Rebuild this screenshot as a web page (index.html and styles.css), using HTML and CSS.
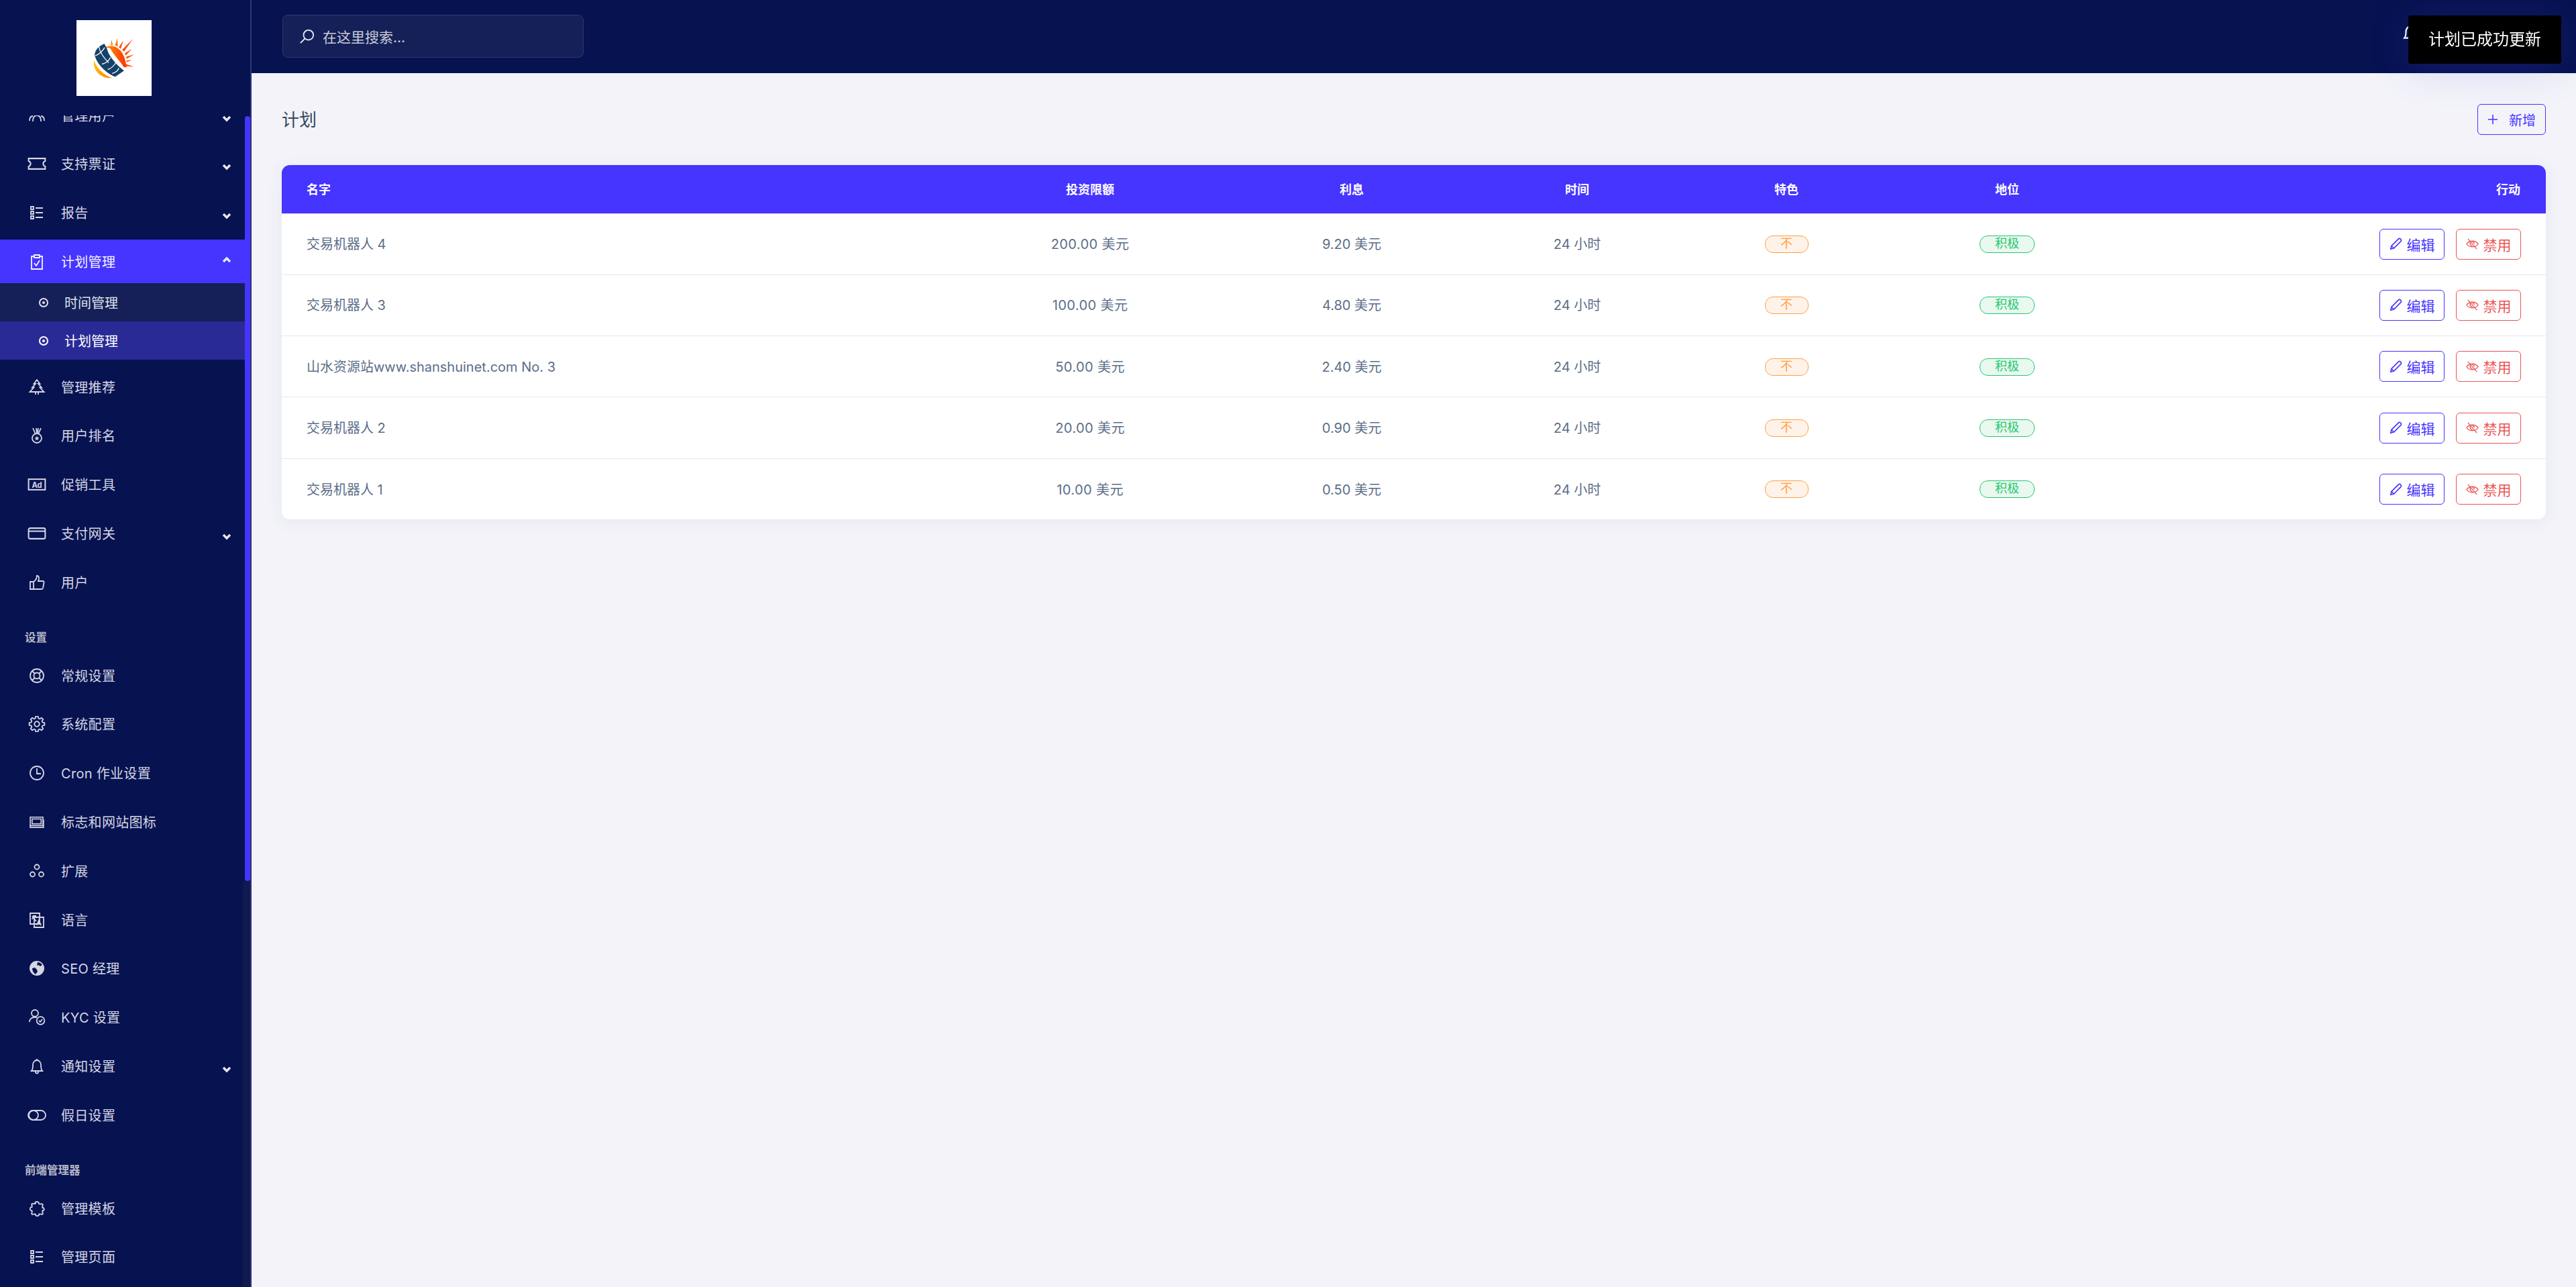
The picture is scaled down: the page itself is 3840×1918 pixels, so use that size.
FILE: index.html
```html
<!DOCTYPE html>
<html lang="zh-CN">
<head>
<meta charset="utf-8">
<title>计划</title>
<link rel="stylesheet" href="styles.css">
</head>
<body>
<svg class="sprite" xmlns="http://www.w3.org/2000/svg">
  <symbol id="i-users" viewBox="0 0 24 24"><circle cx="6" cy="8" r="2.6"/><circle cx="12" cy="6" r="3"/><circle cx="18" cy="8" r="2.6"/><path d="M1 20c0-5 2-7 5-7M23 20c0-5-2-7-5-7M6 21c0-6 2-9 6-9s6 3 6 9"/></symbol>
  <symbol id="i-ticket" viewBox="0 0 24 16"><path d="M1 1h22v3.500c-3.500.8-3.500 6.200 0 7V15H1v-3.500c3.500-.8 3.500-6.200 0-7z"/></symbol>
  <symbol id="i-tasks" viewBox="0 0 24 24"><path d="M3 3h4v4H3zM3 10h4v4H3zM3 17h4v4H3zM10 5h11M10 12h11M10 19h11"/></symbol>
  <symbol id="i-clip" viewBox="0 0 24 24"><path d="M8 4H4v19h16V4h-4"/><path d="M8 2h8v4H8zM8 14l3 4 5-8"/></symbol>
  <symbol id="i-tree" viewBox="0 0 24 24"><path d="M12 1l4.500 6H14l5 5.500h-2.500l6 6.500H1.500l6-6.500H5l5-5.500H7.500zM10 19v4M14 19v4"/></symbol>
  <symbol id="i-medal" viewBox="0 0 24 24"><path d="M6 1l4 9M11 1l1 7M13 8l1-7M18 1l-4 9"/><circle cx="12" cy="16" r="7"/><path class="solid" d="M12 12.500l1 2.400 2.500.2-1.900 1.600.6 2.500-2.200-1.300-2.200 1.300.6-2.500-1.900-1.600 2.500-.2z"/></symbol>
  <symbol id="i-card" viewBox="0 0 24 16"><rect x="1" y="1" width="22" height="14" rx="2"/><path d="M1 5h22"/></symbol>
  <symbol id="i-thumb" viewBox="0 0 24 24"><path d="M2 11h5v11H2zM7 11c3-2 5-5 5-9 3 0 4 3 2 8h7c1 0 2 1 1.500 2.500L21 20.500c-.3 1-1 1.500-2 1.500H7"/></symbol>
  <symbol id="i-ring" viewBox="0 0 24 24"><circle cx="12" cy="12" r="10"/><circle cx="12" cy="12" r="4.500"/><path d="M5 5l4 4M19 5l-4 4M5 19l4-4M19 19l-4-4"/></symbol>
  <symbol id="i-cog" viewBox="-12 -12 24 24"><circle r="3.800"/><path stroke-linejoin="round" d="M8.500-2.280L11.360-1.800 11.360 1.800 8.500 2.280 7.620 4.400 9.300 6.760 6.760 9.300 4.400 7.620 2.280 8.500 1.800 11.360-1.800 11.360-2.280 8.500-4.400 7.620-6.760 9.300-9.300 6.760-7.620 4.400-8.500 2.280-11.360 1.800-11.360-1.800-8.500-2.280-7.620-4.400-9.300-6.760-6.760-9.300-4.400-7.620-2.280-8.500-1.800-11.360 1.800-11.360 2.280-8.500 4.400-7.620 6.760-9.300 9.300-6.760 7.620-4.400z"/></symbol>
  <symbol id="i-clock" viewBox="0 0 24 24"><circle cx="12" cy="12" r="10"/><path d="M12 5v8H6" transform="matrix(-1 0 0 1 24 0)"/></symbol>
  <symbol id="i-images" viewBox="0 0 24 20"><path d="M1 2h21v14H1z"/><path d="M4 5h15v8H4z"/><path d="M1 16v3h22V6"/></symbol>
  <symbol id="i-cubes" viewBox="0 0 24 24"><circle cx="12" cy="6" r="3.500"/><circle cx="5.500" cy="17" r="3.500"/><circle cx="18.500" cy="17" r="3.500"/></symbol>
  <symbol id="i-lang" viewBox="0 0 24 24"><path d="M2 2h14v16H2zM8 8h14v15H8z"/><path class="solid" d="M15 10l4 10h-2l-.6-2h-3.300l-.6 2H11z"/><path d="M5 6l6 8M5 11l2-5h4"/></symbol>
  <symbol id="i-globe" viewBox="0 0 24 24"><circle class="solid" cx="12" cy="12" r="11"/><path class="cut" d="M13 3c3 0 5 1.500 7 4l-3 2-3-2-2 1zM5 12l4-1 3 3 1 3-3 4c-3-2-5-5-5-9z"/></symbol>
  <symbol id="i-kyc" viewBox="0 0 24 24"><circle cx="9" cy="6" r="5"/><path d="M1 19c0-4 3-7 8-7 1 0 2 .2 3 .5"/><circle cx="17.500" cy="17" r="5.800"/><path d="M15 17l2 2 3-4"/></symbol>
  <symbol id="i-bell" viewBox="0 0 24 24"><path d="M12 1v2M4 19c2-2 2-5 2-9 0-4 3-7 6-7s6 3 6 7c0 4 0 7 2 9zM3 19h18M10 19v2c0 2 4 2 4 0v-2"/></symbol>
  <symbol id="i-toggle" viewBox="0 0 28 16"><rect x="1" y="1" width="26" height="14" rx="7"/><circle cx="9" cy="8" r="7"/></symbol>
  <symbol id="i-puzzle" viewBox="0 0 24 24"><path stroke-linejoin="round" d="M9.500 4.500c-1.500-3.500 6.500-3.500 5 0 1.500 2 4.500 0 6 1 1 1.500-1 3.500 0 5.500 3-1 3 5 0 4-1 2 1 4 0 5.500-1.500 1-4-1-5.500 0 1 3.500-6 3.500-5 0-1.500-1-4 1-5.500 0-1-1.500 1-3.500 0-5.500-3.500 1-3.500-6 0-5 1-2-1-3.500 0-5 1.500-1 4 1 5.500-.5z"/></symbol>
  <symbol id="i-chev" viewBox="0 0 14 10"><path d="M2 2l5 5 5-5"/></symbol>
  <symbol id="i-pencil" viewBox="0 0 16 16"><path d="M1.500 14.500l1-4L11 2c1-1 2-1 3 0s1 2 0 3l-8.500 8.500zM2.500 10.500l3 3"/></symbol>
  <symbol id="i-eye" viewBox="0 0 20 18"><path d="M1 9c4-6 14-6 18 0-4 6-14 6-18 0z"/><path d="M7 6c-1.500 3 .5 6 3 6M13 9c0-2-1-3-3-3"/><path d="M3 1l14 16"/></symbol>
</svg>

<aside class="sidebar">
  <div class="logo-bar">
    <div class="logo">
      <svg viewBox="162 60 336 338" xmlns="http://www.w3.org/2000/svg">
        <defs><linearGradient id="sun" x1="0" y1="0" x2="1" y2="0"><stop offset="0" stop-color="#ffc20e"/><stop offset="1" stop-color="#ff3300"/></linearGradient></defs>
        <path fill="url(#sun)" d="M292 180c30-14 84-2 94 90l-12 0c-16-26-42-50-60-82-6-6-14-6-22 0zM240 240c-6 44 30 82 82 78-34-10-66-40-82-78z"/>
        <path fill="#ff7a10" d="M316 172l2-26 7 26zM334 172l11-32 2 38z"/>
        <path fill="#ff4a06" d="M351 181l21-31-12 38zM366 192l49-49-40 57zM378 208l32-20-28 30zM385 223l35-10-34 20zM386 240l24-2-24 10zM384 256l34 12-36-3z"/>
        <path fill="#164268" d="M287 165c-26 10-41 26-44 50 8 36 46 80 92 98l40-28c-26-18-68-62-76-96z"/>
        <path fill="none" stroke="#fff" stroke-width="4" d="M246 218c20-6 32-20 42-36M262 178c4 24 24 52 44 72M276 256c18-4 30-14 38-30M302 280c14-4 26-14 36-30M322 298c14-4 24-10 30-24"/>
      </svg>
    </div>
  </div>
  <nav class="menu">
    <div class="menu-scroll">
      <a class="item"><svg class="ic"><use href="#i-users"/></svg><span>管理用户</span><svg class="chev"><use href="#i-chev"/></svg></a>
      <a class="item"><svg class="ic ic-wide"><use href="#i-ticket"/></svg><span>支持票证</span><svg class="chev"><use href="#i-chev"/></svg></a>
      <a class="item"><svg class="ic"><use href="#i-tasks"/></svg><span>报告</span><svg class="chev"><use href="#i-chev"/></svg></a>
      <a class="item active"><svg class="ic"><use href="#i-clip"/></svg><span>计划管理</span><svg class="chev up"><use href="#i-chev"/></svg></a>
      <div class="sub">
        <a class="sub-item"><span class="dot"></span><span>时间管理</span></a>
        <a class="sub-item current"><span class="dot"></span><span>计划管理</span></a>
      </div>
      <a class="item"><svg class="ic"><use href="#i-tree"/></svg><span>管理推荐</span></a>
      <a class="item"><svg class="ic"><use href="#i-medal"/></svg><span>用户排名</span></a>
      <a class="item"><svg class="ic ic-wide" viewBox="0 0 24 16"><rect x="1" y="1" width="22" height="14"/><text x="12" y="12" text-anchor="middle" class="svg-ad">Ad</text></svg><span>促销工具</span></a>
      <a class="item"><svg class="ic ic-wide"><use href="#i-card"/></svg><span>支付网关</span><svg class="chev"><use href="#i-chev"/></svg></a>
      <a class="item"><svg class="ic"><use href="#i-thumb"/></svg><span>用户</span></a>
      <div class="heading">设置</div>
      <a class="item"><svg class="ic"><use href="#i-ring"/></svg><span>常规设置</span></a>
      <a class="item"><svg class="ic"><use href="#i-cog"/></svg><span>系统配置</span></a>
      <a class="item"><svg class="ic"><use href="#i-clock"/></svg><span>Cron 作业设置</span></a>
      <a class="item"><svg class="ic ic-wide"><use href="#i-images"/></svg><span>标志和网站图标</span></a>
      <a class="item"><svg class="ic"><use href="#i-cubes"/></svg><span>扩展</span></a>
      <a class="item"><svg class="ic"><use href="#i-lang"/></svg><span>语言</span></a>
      <a class="item"><svg class="ic"><use href="#i-globe"/></svg><span>SEO 经理</span></a>
      <a class="item"><svg class="ic"><use href="#i-kyc"/></svg><span>KYC 设置</span></a>
      <a class="item"><svg class="ic"><use href="#i-bell"/></svg><span>通知设置</span><svg class="chev"><use href="#i-chev"/></svg></a>
      <a class="item"><svg class="ic ic-toggle"><use href="#i-toggle"/></svg><span>假日设置</span></a>
      <div class="heading">前端管理器</div>
      <a class="item"><svg class="ic"><use href="#i-puzzle"/></svg><span>管理模板</span></a>
      <a class="item"><svg class="ic"><use href="#i-tasks"/></svg><span>管理页面</span></a>
    </div>
    <div class="track"></div>
    <div class="thumb"></div>
  </nav>
</aside>

<div class="main">
  <header class="topbar">
    <div class="search">
      <svg class="search-ic" viewBox="0 0 24 24"><circle cx="14" cy="10" r="8"/><path d="M8 16l-7 7"/></svg>
      <span>在这里搜索...</span>
    </div>
    <svg class="top-ic" viewBox="0 0 24 24"><path d="M12 1v2M4 19c2-2 2-5 2-9 0-4 3-7 6-7s6 3 6 7c0 4 0 7 2 9zM3 19h18"/></svg>
  </header>
  <main class="content">
    <div class="page-head">
      <h1>计划</h1>
      <a class="btn-add"><svg viewBox="0 0 16 16"><path d="M8 1v14M1 8h14"/></svg><span>新增</span></a>
    </div>
    <div class="card">
      <table>
        <colgroup><col class="c1"><col class="c2"><col class="c3"><col class="c4"><col class="c5"><col class="c6"><col class="c7"></colgroup>
        <thead><tr><th>名字</th><th>投资限额</th><th>利息</th><th>时间</th><th>特色</th><th>地位</th><th>行动</th></tr></thead>
        <tbody>
          <tr><td class="txt">交易机器人 4</td><td class="txt amt">200.00 美元</td><td class="txt">9.20 美元</td><td class="txt">24 小时</td><td><span class="badge warn">不</span></td><td><span class="badge ok">积极</span></td><td><div class="acts"><a class="btn edit"><svg><use href="#i-pencil"/></svg>编辑</a><a class="btn off"><svg><use href="#i-eye"/></svg>禁用</a></div></td></tr>
          <tr><td class="txt">交易机器人 3</td><td class="txt amt">100.00 美元</td><td class="txt">4.80 美元</td><td class="txt">24 小时</td><td><span class="badge warn">不</span></td><td><span class="badge ok">积极</span></td><td><div class="acts"><a class="btn edit"><svg><use href="#i-pencil"/></svg>编辑</a><a class="btn off"><svg><use href="#i-eye"/></svg>禁用</a></div></td></tr>
          <tr><td class="txt">山水资源站www.shanshuinet.com No. 3</td><td class="txt amt">50.00 美元</td><td class="txt">2.40 美元</td><td class="txt">24 小时</td><td><span class="badge warn">不</span></td><td><span class="badge ok">积极</span></td><td><div class="acts"><a class="btn edit"><svg><use href="#i-pencil"/></svg>编辑</a><a class="btn off"><svg><use href="#i-eye"/></svg>禁用</a></div></td></tr>
          <tr><td class="txt">交易机器人 2</td><td class="txt amt">20.00 美元</td><td class="txt">0.90 美元</td><td class="txt">24 小时</td><td><span class="badge warn">不</span></td><td><span class="badge ok">积极</span></td><td><div class="acts"><a class="btn edit"><svg><use href="#i-pencil"/></svg>编辑</a><a class="btn off"><svg><use href="#i-eye"/></svg>禁用</a></div></td></tr>
          <tr><td class="txt">交易机器人 1</td><td class="txt amt">10.00 美元</td><td class="txt">0.50 美元</td><td class="txt">24 小时</td><td><span class="badge warn">不</span></td><td><span class="badge ok">积极</span></td><td><div class="acts"><a class="btn edit"><svg><use href="#i-pencil"/></svg>编辑</a><a class="btn off"><svg><use href="#i-eye"/></svg>禁用</a></div></td></tr>
        </tbody>
      </table>
    </div>
  </main>
</div>
<div class="toast">计划已成功更新</div>
</body>
</html>
```
FILE: styles.css
```css
* { box-sizing: border-box; }
html, body { height: 100%; }
body {
  margin: 0;
  display: flex;
  height: 100vh;
  overflow: hidden;
  background: #f3f3f9;
  font-family: Inter, "Noto Sans CJK SC", sans-serif;
  font-size: 20px;
  color: #5b6e88;
}
.sprite { position: absolute; width: 0; height: 0; overflow: hidden; }
symbol { overflow: visible; }
svg { fill: none; stroke: currentColor; }
.solid { fill: currentColor; stroke: none; }
.cut { fill: #071251; stroke: none; }
.svg-ad { font: 700 10px Inter, sans-serif; fill: currentColor; stroke: none; }

/* sidebar */
.sidebar {
  width: 375px;
  flex: none;
  height: 100%;
  display: flex;
  flex-direction: column;
  background: #071251;
  border-right: 2px solid #2d3577;
}
.logo-bar { height: 172px; flex: none; padding: 30px 0 0 114px; }
.logo { width: 112px; height: 113px; background: #fff; }
.logo svg { display: block; width: 100%; height: 100%; stroke: none; }
.menu { flex: 1; position: relative; overflow: hidden; }
.menu-scroll { margin-top: -33px; display: flex; flex-direction: column; }
.item {
  height: 65px;
  margin-bottom: 7.8px;
  flex: none;
  display: flex;
  align-items: center;
  padding-left: 41px;
  color: #d4d6e2;
  font-size: 20px;
}
.item span { margin-left: 22px; flex: 1; letter-spacing: .3px; padding-bottom: 1px; }
.ic { width: 28px; height: 24px; flex: none; stroke-width: 1.8; }
.ic-wide { height: 18px; }
.ic-toggle { height: 18px; }
.chev { width: 14px; height: 10px; flex: none; margin: 10px 28px 0 0; stroke-width: 3.4; color: #e6e7ef; }
.chev.up { transform: rotate(180deg); margin-top: 0; margin-bottom: 6px; }
.active { background: #4634ff; color: #f3f2ff; margin-bottom: 0; }
.sub { display: flex; flex-direction: column; margin-bottom: 7.8px; }
.sub-item {
  height: 57px;
  display: flex;
  align-items: center;
  padding-left: 58px;
  background: #152058;
  color: #dfe0ea;
}
.sub-item.current { background: #2a2a96; color: #fff; }
.dot { width: 14px; height: 14px; flex: none; border: 2px solid currentColor; border-radius: 50%; position: relative; margin-right: 24px; }
.dot::after { content: ""; position: absolute; inset: 3px; background: currentColor; border-radius: 50%; }
.heading {
  height: 66px;
  margin-top: 0;
  padding: 30px 0 0 37px;
  line-height: 24px;
  font-size: 16.5px;
  font-weight: 700;
  color: #b4b7c6;
}
.track { position: absolute; left: 362px; right: 0; top: 1141px; bottom: 0; background: #111a4d; }
.thumb { position: absolute; left: 365px; width: 8px; top: 1px; height: 1140px; background: #4634ff; border-radius: 4px; }

/* main */
.main { flex: 1; min-width: 0; display: flex; flex-direction: column; }
.topbar {
  height: 109px;
  flex: none;
  display: flex;
  align-items: center;
  justify-content: space-between;
  padding: 0 46px;
  background: #071251;
}
.search {
  width: 449px;
  height: 64px;
  margin-top: -1px;
  display: flex;
  align-items: center;
  gap: 12px;
  padding-left: 25px;
  background: #152058;
  border: 1px solid #2d3670;
  border-radius: 8px;
  color: #c9cbd8;
  font-size: 21px;
}
.search-ic { width: 22px; height: 24px; stroke: #eceef5; stroke-width: 2; flex: none; }
.top-ic { position: absolute; left: 3580px; top: 36px; width: 26px; height: 26px; stroke: #fff; stroke-width: 2; }
.content { flex: 1; padding: 46px 45px 0 45px; }
.page-head { height: 46px; margin-bottom: 45px; display: flex; justify-content: space-between; align-items: center; }
h1 { margin: 0; padding-bottom: 3px; font-size: 26px; font-weight: 400; color: #34495e; }
.btn-add {
  width: 102px;
  height: 46px;
  display: flex;
  align-items: center;
  gap: 16px;
  padding-left: 14px;
  border: 1px solid #4634ff;
  border-radius: 6px;
  color: #4634ff;
  font-size: 20px;
}
.btn-add svg { width: 16px; height: 16px; flex: none; stroke-width: 1.6; }
.card { background: #fff; border-radius: 12px; box-shadow: 0 4px 24px rgba(80, 80, 160, .07); overflow: hidden; }
table { width: 100%; border-collapse: collapse; table-layout: fixed; }
.c1 { width: 983px; } .c2 { width: 444px; } .c3 { width: 336px; } .c4 { width: 336px; }
.c5 { width: 288px; } .c6 { width: 370px; } .c7 { width: 618px; }
th {
  height: 72px;
  padding: 0 0 2px;
  background: #4634ff;
  color: #fff;
  font-size: 18px;
  font-weight: 700;
  text-align: center;
}
td { height: 91.3px; padding: 0; text-align: center; border-top: 1px solid #e8e8ee; font-size: 20px; }
td.txt { padding-bottom: 2px; }
th:first-child, td:first-child { text-align: left; padding-left: 37px; }
th:last-child { text-align: right; padding-right: 38px; }
.amt { letter-spacing: .4px; }
.badge {
  display: inline-block;
  height: 26px;
  line-height: 22px;
  border: 1px solid;
  border-radius: 12px;
  font-size: 18px;
  text-align: center;
  vertical-align: middle;
}
.warn { width: 65px; color: #ff9f43; background: #fff3e9; }
.ok { width: 82px; color: #28c76f; background: #e9f9f0; }
.acts { display: flex; justify-content: flex-end; gap: 17px; padding-right: 37px; }
.btn {
  width: 97px;
  height: 46px;
  display: flex;
  align-items: center;
  justify-content: center;
  gap: 7px;
  border: 1px solid;
  border-radius: 6px;
  font-size: 21px;
}
.btn svg { width: 19px; height: 19px; flex: none; stroke-width: 1.4; }
.edit { color: #4634ff; }
.off { color: #ea5455; }
.toast {
  position: fixed;
  left: 3590px;
  top: 23px;
  width: 228px;
  height: 72px;
  padding-left: 30px;
  line-height: 72px;
  background: #000;
  border-radius: 4px;
  color: #fff;
  font-size: 24px;
  box-shadow: 0 6px 60px rgba(70, 80, 220, .18);
}
```
